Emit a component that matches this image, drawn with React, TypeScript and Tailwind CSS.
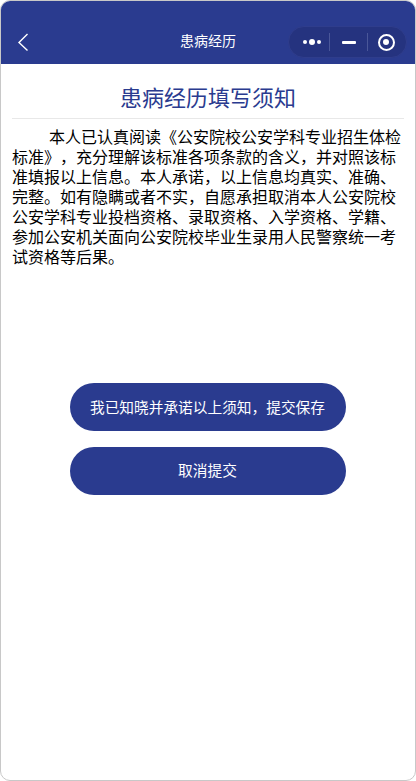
const FONT = 'font-["Noto_Sans_CJK_SC","Liberation_Sans",sans-serif]';

const NOTICE =
  '本人已认真阅读《公安院校公安学科专业招生体检标准》，充分理解该标准各项条款的含义，并对照该标准填报以上信息。本人承诺，以上信息均真实、准确、完整。如有隐瞒或者不实，自愿承担取消本人公安院校公安学科专业投档资格、录取资格、入学资格、学籍、参加公安机关面向公安院校毕业生录用人民警察统一考试资格等后果。';

const Capsule = () => (
  <div className="flex h-[32px] w-[119px] items-center rounded-full border border-[#2f3d8c] bg-[#25337f]">
    <div className="flex w-[40px] items-center justify-center gap-[2px] pl-[5px]">
      <span className="h-[4px] w-[4px] rounded-full bg-white" />
      <span className="h-[6px] w-[6px] rounded-full bg-white" />
      <span className="h-[4px] w-[4px] rounded-full bg-white" />
    </div>
    <div className="h-[18px] w-px bg-[#4a5799]" />
    <div className="flex w-[37px] items-center justify-center">
      <span className="h-[3px] w-[14px] rounded-[1px] bg-white" />
    </div>
    <div className="h-[18px] w-px bg-[#4a5799]" />
    <div className="flex flex-1 items-center justify-center pr-[2px]">
      <span className="flex h-[17px] w-[17px] items-center justify-center rounded-full border-2 border-white">
        <span className="h-[6px] w-[6px] rounded-full bg-white" />
      </span>
    </div>
  </div>
);

export default function App() {
  return (
    <div className={`h-[781px] w-[416px] bg-white [text-spacing-trim:space-all] ${FONT}`}>
      <div className="flex h-full flex-col overflow-hidden rounded-[10px] border border-[#c8c8c8] bg-white">
        {/* Title bar */}
        <header className="relative flex h-[63px] shrink-0 items-end bg-[#2a3b8f] pb-[6px] pr-[7px] pl-[16px]">
          <svg width="12" height="20" viewBox="0 0 12 20" fill="none" className="mb-[6px]">
            <path d="M10.5 2 2 10.5 10.5 18.5" stroke="white" strokeWidth="1.4" />
          </svg>
          <span className="absolute left-[179px] top-[29px] text-[14px] leading-[20px] text-white">患病经历</span>
          <div className="ml-auto -translate-x-px">
            <Capsule />
          </div>
        </header>

        <main className="flex flex-1 flex-col px-[11px]">
          <h1 className="mt-[16px] text-center text-[22px] leading-[32px] font-normal text-[#2a3b8f]">
            患病经历填写须知
          </h1>
          <div className="mt-[6px] h-px bg-[#e8e8e8]" />
          <p className="mt-[7px] indent-[37px] text-[16px] leading-[20px] text-black">{NOTICE}</p>

          <div className="mt-[117px] flex flex-col items-center gap-[16px] pr-[1px]">
            <button className="h-[48px] w-[276px] rounded-full bg-[#2a3b8f] text-[14.7px] text-white">
              我已知晓并承诺以上须知，提交保存
            </button>
            <button className="h-[48px] w-[276px] rounded-full bg-[#2a3b8f] pb-[2px] text-[14.7px] text-white">
              取消提交
            </button>
          </div>
        </main>
      </div>
    </div>
  );
}
